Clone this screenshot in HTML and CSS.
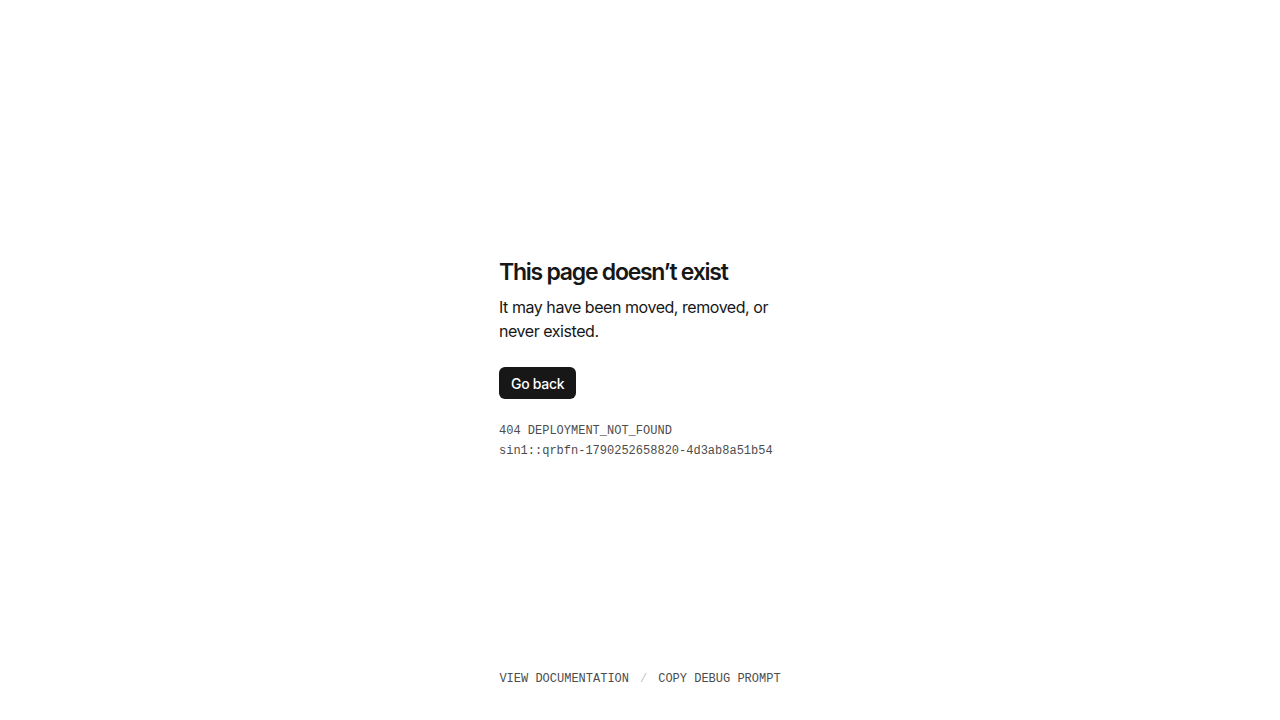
FILE: index.html
```html
<!DOCTYPE html>
<html lang="en">
<head>
<meta charset="utf-8">
<title>404: This page doesn’t exist</title>
<link rel="stylesheet" href="styles.css">
</head>
<body>
<main class="main">
  <div class="card">
    <h1 class="title">This page doesn’t exist</h1>
    <p class="desc">It may have been moved, removed, or never existed.</p>
    <button class="btn" type="button">Go back</button>
    <div class="code">
      <div>404 DEPLOYMENT_NOT_FOUND</div>
      <div>sin1::qrbfn-1790252658820-4d3ab8a51b54</div>
    </div>
  </div>
</main>
<footer class="footer">
  <a class="link" href="#">VIEW DOCUMENTATION</a>
  <span class="sep">/</span>
  <a class="link" href="#">COPY DEBUG PROMPT</a>
</footer>
</body>
</html>
```
FILE: styles.css
```css
html, body {
  margin: 0;
  padding: 0;
  background: #fff;
}
body {
  height: 100vh;
  display: flex;
  flex-direction: column;
  font-family: Inter, "Noto Sans", sans-serif;
  color: #171717;
}
.main {
  flex: 1;
  display: flex;
  align-items: center;
  justify-content: center;
  padding-top: 46px;
}
.card {
  width: 282px;
}
.title {
  margin: 0;
  font-size: 23px;
  line-height: 32px;
  font-weight: 600;
  letter-spacing: -1.25px;
  color: #171717;
}
.desc {
  margin: 7px 0 0;
  font-size: 16px;
  line-height: 24px;
  letter-spacing: -0.45px;
  color: #171717;
}
.btn {
  margin-top: 24px;
  height: 32px;
  padding: 0 12px;
  border: 0;
  border-radius: 6px;
  background: #171717;
  color: #fff;
  font-family: Inter, "Noto Sans", sans-serif;
  font-size: 14px;
  font-weight: 500;
  letter-spacing: -0.3px;
  cursor: pointer;
}
.code {
  margin-top: 22px;
  font-family: "Liberation Mono", "DejaVu Sans Mono", monospace;
  font-size: 12px;
  line-height: 20px;
  color: #4d4d4d;
}
.footer {
  display: flex;
  justify-content: center;
  align-items: center;
  gap: 11px;
  padding-bottom: 33px;
  font-family: "Liberation Mono", "DejaVu Sans Mono", monospace;
  font-size: 12px;
  line-height: 16px;
}
.link {
  color: #4d4d4d;
  text-decoration: none;
}
.sep {
  color: #c4c4c4;
}
```
